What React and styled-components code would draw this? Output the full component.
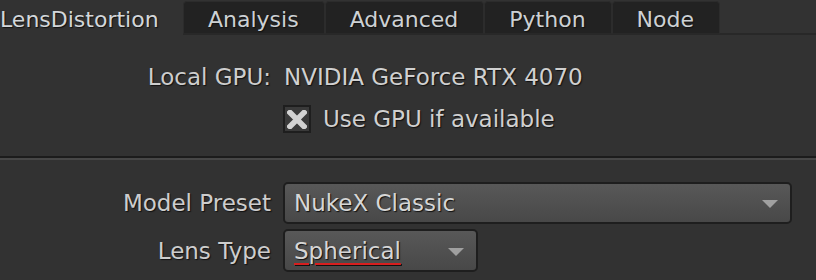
import React from "react";
import styled, { createGlobalStyle } from "styled-components";

const GlobalStyle = createGlobalStyle`
  html, body {
    margin: 0;
    padding: 0;
    background: #323232;
  }
  body {
    font-family: "DejaVu Sans", Verdana, sans-serif;
    font-size: 22px;
    color: #cbcbcb;
  }
`;

const Page = styled.div`
  width: 816px;
  height: 280px;
  overflow: hidden;
  background: #323232;
`;

const TabBar = styled.div`
  display: flex;
  align-items: flex-end;
  height: 35px;
`;

const Tab = styled.div`
  box-sizing: border-box;
  display: flex;
  align-items: center;
  white-space: nowrap;
  text-shadow: 1px 1px 1px #111;
  font-size: 22px;
  color: ${(p) => (p.$active ? "#d3d7da" : "#cdd1d4")};
  ${(p) =>
    p.$active
      ? `
    height: 35px;
    width: 183px;
    padding: 3px 0 0 0;
    background: #323232;
  `
      : `
    height: 34px;
    padding: 3px 25px 0 24px;
    background: #222222;
    border: 1px solid #2c2c2c;
    border-bottom: 2px solid #282828;
    border-radius: 4px 4px 0 0;
    justify-content: center;
  `}
`;

const TabFiller = styled.div`
  flex: 1;
  height: 35px;
  box-sizing: border-box;
  border-bottom: 2px solid #282828;
`;

const Section = styled.div`
  display: grid;
  grid-template-columns: 271px 1fr;
  column-gap: 12px;
  align-items: center;
  font-size: 23px;
  padding: ${(p) => p.$pad};
  row-gap: ${(p) => p.$rowGap};
`;

const Label = styled.div`
  text-align: right;
  white-space: nowrap;
  text-shadow: 1px 1px 1px #111;
  color: #cdcdcd;
`;

const Value = styled.div`
  display: flex;
  align-items: center;
  height: ${(p) => p.$h || "30px"};
  white-space: nowrap;
  text-shadow: 1px 1px 1px #111;
  color: #d0d0d0;
  padding-left: 1px;
`;

const CheckRow = styled.label`
  grid-column: 2;
  display: flex;
  align-items: center;
  gap: 12px;
  height: 28px;
  white-space: nowrap;
  text-shadow: 1px 1px 1px #111;
  color: #d0d0d0;
`;

const CheckBox = styled.span`
  box-sizing: border-box;
  width: 28px;
  height: 28px;
  border: 2px solid #1e1e1e;
  background: #3a3a3a;
  display: flex;
  align-items: center;
  justify-content: center;
`;

const Divider = styled.div`
  height: 2px;
  background: #1c1c1c;
  border-bottom: 2px solid #474747;
`;

const Dropdown = styled.div`
  box-sizing: border-box;
  width: ${(p) => p.$w};
  height: ${(p) => p.$h};
  border: 2px solid #1e1e1e;
  border-radius: 5px;
  background: linear-gradient(#585858, #484848);
  display: flex;
  align-items: center;
  justify-content: space-between;
  padding: 0 12px 0 9px;
  color: #d6d6d6;
  text-shadow: 1px 1px 1px #111;
  white-space: nowrap;
`;

const Arrow = styled.span`
  width: 0;
  height: 0;
  border-left: 8px solid transparent;
  border-right: 8px solid transparent;
  border-top: 8px solid #a0a0a0;
  margin-top: 2px;
`;

const Misspelled = styled.span`
  text-decoration-line: underline;
  text-decoration-color: #d81e1e;
  text-decoration-thickness: 2px;
  text-underline-offset: 4px;
`;

const Cross = () => (
  <svg width="20" height="19" viewBox="0 0 20 19">
    <path d="M3 2.5 L17 16.5 M17 2.5 L3 16.5" stroke="#d2d2d2" strokeWidth="5.5" strokeLinecap="square" />
  </svg>
);

export default function App() {
  return (
    <Page>
      <GlobalStyle />
      <TabBar>
        <Tab $active>LensDistortion</Tab>
        <Tab>Analysis</Tab>
        <Tab>Advanced</Tab>
        <Tab>Python</Tab>
        <Tab>Node</Tab>
        <TabFiller />
      </TabBar>
      <Section $pad="27px 0 23px 0" $rowGap="13px">
        <Label>Local GPU:</Label>
        <Value>NVIDIA GeForce RTX 4070</Value>
        <CheckRow>
          <CheckBox>
            <Cross />
          </CheckBox>
          Use GPU if available
        </CheckRow>
      </Section>
      <Divider />
      <Section $pad="22px 0 0 0" $rowGap="5px">
        <Label>Model Preset</Label>
        <Dropdown $w="509px" $h="42px">
          NukeX Classic
          <Arrow />
        </Dropdown>
        <Label>Lens Type</Label>
        <Dropdown $w="195px" $h="43px">
          <Misspelled>Spherical</Misspelled>
          <Arrow />
        </Dropdown>
      </Section>
    </Page>
  );
}
